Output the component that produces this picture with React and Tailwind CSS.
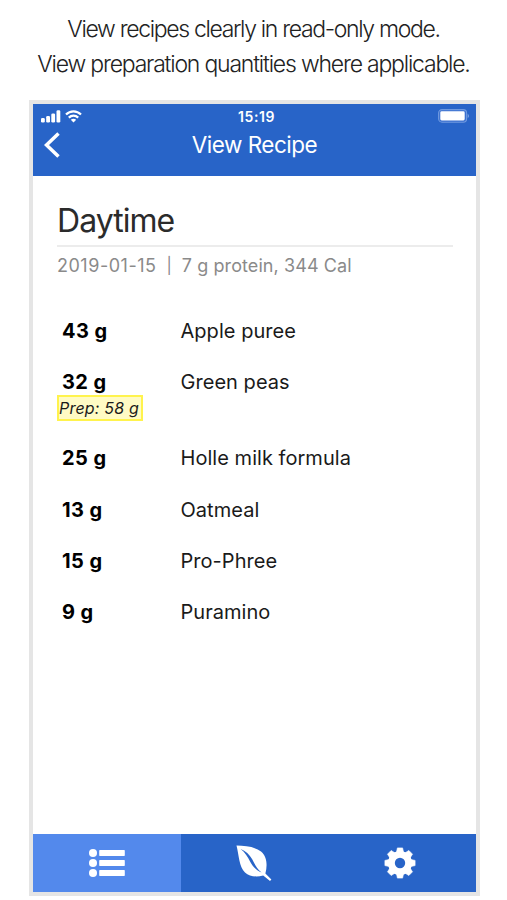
const ingredients = [
  { amount: '43 g', name: 'Apple puree' },
  { amount: '32 g', name: 'Green peas', prep: '58 g' },
  { amount: '25 g', name: 'Holle milk formula' },
  { amount: '13 g', name: 'Oatmeal' },
  { amount: '15 g', name: 'Pro-Phree' },
  { amount: '9 g', name: 'Puramino' },
]

const SignalIcon = () => (
  <svg width="20" height="13" viewBox="0 0 20 13" fill="white">
    <rect x="0" y="8" width="3.8" height="4.5" rx="1.3" />
    <rect x="5.2" y="6" width="3.8" height="6.5" rx="1.3" />
    <rect x="10.3" y="3.5" width="3.8" height="9" rx="1.3" />
    <rect x="15.5" y="0.2" width="3.8" height="12.3" rx="1.3" />
  </svg>
)

const WifiIcon = () => (
  <svg width="17" height="13" viewBox="0 0 17 13" fill="none" stroke="white" strokeWidth="2.2">
    <path d="M1 4.6C5.2 0.3 11.8 0.3 16 4.6" />
    <path d="M3.8 7.6C6.5 5 10.5 5 13.2 7.6" />
    <path d="M8.5 12.4L5.8 9.7C7.4 8.3 9.6 8.3 11.2 9.7Z" fill="white" stroke="none" />
  </svg>
)

const BatteryIcon = () => (
  <svg width="32" height="14" viewBox="0 0 32 14">
    <rect x="0.6" y="0.6" width="28" height="12.6" rx="3.4" fill="#3a70d0" stroke="#6f99df" strokeWidth="1.1" />
    <rect x="2.3" y="2.3" width="24.4" height="9.2" rx="1.4" fill="white" />
    <path d="M29.7 4.7C31.4 5.4 31.4 8.4 29.7 9.1Z" fill="#7ea4e4" />
  </svg>
)

const ListIcon = () => (
  <svg width="36" height="30" viewBox="0 0 36 30" fill="white">
    {[5, 15, 25].map(y => (
      <g key={y}>
        <circle cx="4" cy={y} r="4" />
        <rect x="10.2" y={y - 2.9} width="25.6" height="5.8" rx="0.6" />
      </g>
    ))}
  </svg>
)

const LeafIcon = () => (
  <svg width="36" height="37" viewBox="0 0 36 37">
    <path
      d="M0.5 0.6C9 0.7 18.5 1.6 25 6.5C31 11.5 31.6 20 29.4 28.4L35.4 34.6L34 36L27.2 30.4C21 32.2 13.5 31.8 9 27.5C3 22 3 10 0.5 0.6Z"
      fill="white"
    />
    <path d="M4.6 3.9C9.5 5.8 13.6 9.4 16.2 14.2C18.6 18.8 20.4 23 25.6 27.6C20 25 16.6 21.4 14.2 16.8C11.8 12 9.2 7.4 4.6 3.9Z" fill="#2864c8" />
  </svg>
)

const GearIcon = () => (
  <svg width="32" height="32" viewBox="-16 -16 32 32">
    {[0, 45, 90, 135].map(angle => (
      <path
        key={angle}
        d="M-2.6 -15.1H2.6L3.7 -10V10L2.6 15.1H-2.6L-3.7 10V-10Z"
        fill="white"
        stroke="white"
        strokeWidth="0.6"
        strokeLinejoin="round"
        transform={`rotate(${angle})`}
      />
    ))}
    <circle r="12" fill="white" />
    <circle r="5.2" fill="#2864c8" />
  </svg>
)

const App = () => {
  return (
    <div className="h-[900px] w-[507px] bg-white font-['Inter',sans-serif] overflow-hidden">
      <div className="h-[100px] pt-3 text-center text-[23px] leading-[34.5px] font-light text-[#222]">
        <p className="tracking-[-1.34px]">View recipes clearly in read-only mode.</p>
        <p className="tracking-[-1.2px]">View preparation quantities where applicable.</p>
      </div>

      <div className="ml-[29px] flex h-[796px] w-[451px] flex-col border-4 border-[#e5e5e5]">
        {/* Status bar and title */}
        <header className="h-[72px] bg-[#2864c8] text-white">
          <div className="grid h-6 grid-cols-3 items-center pl-2 pr-[6px]">
            <div className="flex items-center gap-1">
              <SignalIcon />
              <WifiIcon />
            </div>
            <span className="pl-0.5 text-center text-[14px] font-semibold tracking-[0.6px]">15:19</span>
            <div className="flex justify-end">
              <BatteryIcon />
            </div>
          </div>
          <div className="grid h-[34px] grid-cols-[40px_1fr_40px] items-center">
            <svg className="ml-[11px]" width="16" height="26" viewBox="0 0 16 26" fill="none" stroke="white" strokeWidth="3.5">
              <path d="M14.5 1.5L2.5 13L14.5 24.5" />
            </svg>
            <h1 className="text-center text-[22.5px] leading-[34px] tracking-[-0.5px]">View Recipe</h1>
          </div>
        </header>

        <main className="flex-1 pt-6 pr-[23px] pl-6">
          <h2 className="h-[47px] border-b-2 border-[#ececec] text-[32px] leading-[42px] tracking-[-0.95px] text-[#2b2b2b]">Daytime</h2>
          <p className="mt-1 flex text-[18px] leading-[30px] whitespace-pre text-[#8a8a8a]">
            <span className="tracking-[0.52px]">2019-01-15</span>
            <span className="-mt-px pl-px text-[16px]">{'  |  '}</span>
            <span className="pl-px tracking-[0.08px]">7 g protein, 344 Cal</span>
          </p>

          <ul className="mt-[35px] text-[20px] leading-[30px] text-[#1a1a1a]">
            {ingredients.map(item => (
              <li key={item.name} className={`flex ${item.prep ? 'h-[76px]' : 'h-[51.3px]'}`}>
                <div className="w-[123.5px]">
                  <div className="pl-[5px] font-bold tracking-[0.45px] text-black">{item.amount}</div>
                  {item.prep && (
                    <div className="-mt-0.5 h-[26px] w-[86px] border-2 border-[#fff34d] bg-[#fffbc4] text-[16px] leading-[22px] tracking-[0.2px] whitespace-nowrap italic">
                      Prep: {item.prep}
                    </div>
                  )}
                </div>
                <span className="tracking-[0.04px]">{item.name}</span>
              </li>
            ))}
          </ul>
        </main>

        {/* Bottom tabs */}
        <nav className="grid h-[58px] grid-cols-[148px_146px_146px] bg-[#2864c8]">
          <div className="flex items-center justify-center bg-[#5389ec]">
            <ListIcon />
          </div>
          <div className="flex items-center justify-center">
            <LeafIcon />
          </div>
          <div className="flex items-center justify-center">
            <GearIcon />
          </div>
        </nav>
      </div>
    </div>
  )
}

export default App
